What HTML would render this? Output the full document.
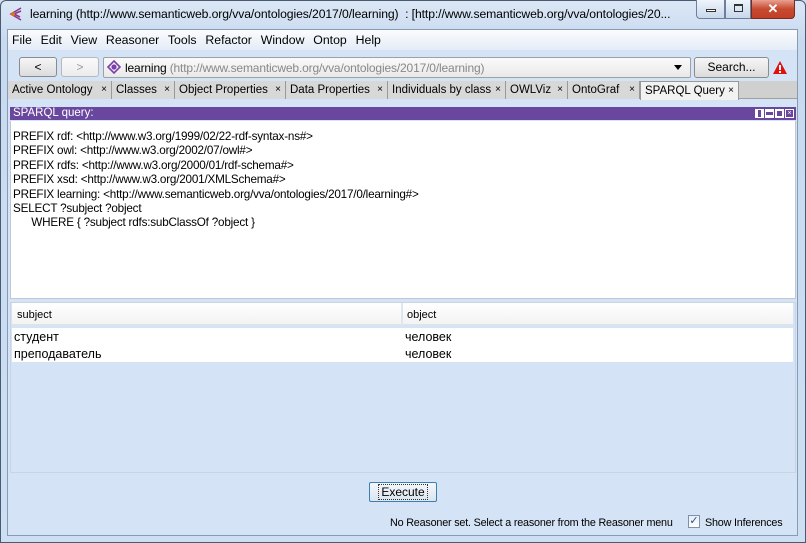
<!DOCTYPE html>
<html><head><meta charset="utf-8"><style>
*{margin:0;padding:0;box-sizing:border-box}
body{width:806px;height:543px;overflow:hidden;background:#cfe0f4;font-family:"Liberation Sans",sans-serif;font-size:12px;color:#000;position:relative}
.a{position:absolute}
.t{white-space:nowrap}
</style></head><body>
<div class="a" style="left:0;top:0;width:806px;height:543px;background:linear-gradient(#dbe7f5,#c8daf0 40px,#cddff3);border:1px solid #4a5a70;border-radius:6px 6px 0 0"></div>
<svg class="a" style="left:8px;top:6px" width="16" height="16"><path d="M13 2 L3 8 L13 14 M6 8 L13 5 M6 8 L12 11" stroke="#8a3a8a" stroke-width="1.6" fill="none"/><circle cx="5" cy="8" r="2" fill="#e07020"/></svg>
<div class="a t" style="left:30px;top:7px;font-size:12.2px;letter-spacing:-0.1px">learning (http://www.semanticweb.org/vva/ontologies/2017/0/learning)&nbsp; : [http://www.semanticweb.org/vva/ontologies/20...</div>
<div class="a" style="left:696px;top:0;width:29px;height:19px;border:1px solid #6d7f99;border-top:none;border-radius:0 0 0 4px;background:linear-gradient(#eef4fb,#c8d8ec)"><div class="a" style="left:9px;top:9px;width:10px;height:3px;border:1px solid #333;background:#fff"></div></div>
<div class="a" style="left:725px;top:0;width:26px;height:19px;border:1px solid #6d7f99;border-top:none;background:linear-gradient(#eef4fb,#c8d8ec)"><div class="a" style="left:8px;top:4px;width:9px;height:8px;border:1px solid #333;border-top-width:2px"></div></div>
<div class="a" style="left:751px;top:0;width:44px;height:19px;border:1px solid #7a2a20;border-top:none;border-radius:0 0 4px 0;background:linear-gradient(#e8a090,#c74a30 50%,#c23e28);color:#fff;font-weight:bold;text-align:center;font-size:13px;line-height:17px">✕</div>
<div class="a" style="left:7px;top:29px;width:791px;height:507px;background:#d4e3f6;border:1px solid #8a9ab0"></div>
<div class="a" style="left:8px;top:30px;width:789px;height:20px;background:linear-gradient(#fbfcfe,#e4ecf7)"></div>
<div class="a t" style="left:12px;top:33px;font-size:12.3px;word-spacing:1px">File&nbsp; Edit&nbsp; View&nbsp; Reasoner&nbsp; Tools&nbsp; Refactor&nbsp; Window&nbsp; Ontop&nbsp; Help</div>
<div class="a" style="left:19px;top:57px;width:38px;height:20px;border:1px solid #8b8b8b;border-radius:3px;background:linear-gradient(#f6f6f6,#dcdcdc);text-align:center;line-height:18px">&lt;</div>
<div class="a" style="left:61px;top:57px;width:38px;height:20px;border:1px solid #b8b8b8;border-radius:3px;background:linear-gradient(#fafafa,#ececec);text-align:center;line-height:18px;color:#999">&gt;</div>
<div class="a" style="left:103px;top:57px;width:588px;height:21px;border:1px solid #a0a0a0;border-radius:2px;background:linear-gradient(#fafafa,#e9e9e9)"></div>
<svg class="a" style="left:107px;top:60px" width="14" height="14"><path d="M7 1 L13 7 L7 13 L1 7Z" fill="none" stroke="#7a3fa8" stroke-width="1.6"/><circle cx="7" cy="7" r="2.6" fill="#7a3fa8"/></svg>
<div class="a t" style="left:125px;top:61px;font-size:12px;letter-spacing:-0.15px">learning <span style="color:#888">(http://www.semanticweb.org/vva/ontologies/2017/0/learning)</span></div>
<div class="a" style="left:674px;top:65px;border-left:4px solid transparent;border-right:4px solid transparent;border-top:5px solid #000"></div>
<div class="a" style="left:694px;top:57px;width:75px;height:21px;border:1px solid #8b8b8b;border-radius:3px;background:linear-gradient(#f6f6f6,#dcdcdc);text-align:center;line-height:19px">Search...</div>
<svg class="a" style="left:772px;top:60px" width="16" height="15"><path d="M8 1 L15 14 L1 14Z" fill="#e01010"/><rect x="7" y="5" width="2" height="5" fill="#fff"/><rect x="7" y="11" width="2" height="2" fill="#fff"/></svg>
<div class="a" style="left:8px;top:81px;width:789px;height:18px;background:#d0d0d0;border-bottom:1px solid #a0a0a0"></div>
<div class="a t" style="left:8px;top:81px;height:18px;display:flex;font-size:11.5px;line-height:18px">
<div style="width:104px;padding-left:4px;border-right:1px solid #999;background:#d8d8d8">Active Ontology<span style="float:right;margin-right:4px;font-size:10px">×</span></div>
<div style="width:63px;padding-left:4px;border-right:1px solid #999;background:#d8d8d8">Classes<span style="float:right;margin-right:4px;font-size:10px">×</span></div>
<div style="width:111px;padding-left:4px;border-right:1px solid #999;background:#d8d8d8">Object Properties<span style="float:right;margin-right:4px;font-size:10px">×</span></div>
<div style="width:102px;padding-left:4px;border-right:1px solid #999;background:#d8d8d8">Data Properties<span style="float:right;margin-right:4px;font-size:10px">×</span></div>
<div style="width:118px;padding-left:4px;border-right:1px solid #999;background:#d8d8d8">Individuals by class<span style="float:right;margin-right:4px;font-size:10px">×</span></div>
<div style="width:62px;padding-left:4px;border-right:1px solid #999;background:#d8d8d8">OWLViz<span style="float:right;margin-right:4px;font-size:10px">×</span></div>
<div style="width:72px;padding-left:4px;border-right:1px solid #999;background:#d8d8d8">OntoGraf<span style="float:right;margin-right:4px;font-size:10px">×</span></div>
<div style="width:99px;padding-left:4px;background:#f2f2f2;border:1px solid #999;border-bottom:none;height:19px">SPARQL Query<span style="float:right;margin-right:4px;font-size:10px">×</span></div>
</div>
<div class="a" style="left:10px;top:107px;width:786px;height:13px;background:#6a479e"></div>
<div class="a t" style="left:13px;top:107px;color:#fff;font-size:11.5px;line-height:13px">SPARQL query:</div>
<div class="a" style="left:755px;top:109px;display:flex;gap:1px"><div style="width:9px;height:9px;border:1px solid #fff;border-left-width:3px;border-right-width:3px"></div><div style="width:9px;height:9px;border:1px solid #fff;border-top-width:3px;border-bottom-width:3px"></div><div style="width:9px;height:9px;border:2px solid #fff"></div><div style="width:9px;height:9px;border:1px solid #fff;color:#fff;font-size:7px;line-height:7px;text-align:center">×</div></div>
<div class="a" style="left:10px;top:121px;width:786px;height:178px;background:#fff;border:1px solid #c0c8d4;border-top:none"></div>
<div class="a t" style="left:13px;top:130px;font-size:11.7px;line-height:14.4px;letter-spacing:-0.2px">PREFIX rdf: &lt;http://www.w3.org/1999/02/22-rdf-syntax-ns#&gt;<br>PREFIX owl: &lt;http://www.w3.org/2002/07/owl#&gt;<br>PREFIX rdfs: &lt;http://www.w3.org/2000/01/rdf-schema#&gt;<br>PREFIX xsd: &lt;http://www.w3.org/2001/XMLSchema#&gt;<br>PREFIX learning: &lt;http://www.semanticweb.org/vva/ontologies/2017/0/learning#&gt;<br>SELECT ?subject ?object<br>&nbsp; &nbsp; &nbsp; WHERE { ?subject rdfs:subClassOf ?object }</div>
<div class="a" style="left:10px;top:302px;width:786px;height:171px;background:#d4e3f6;border:1px solid #c8d4e2"></div>
<div class="a" style="left:12px;top:303px;width:781px;height:23px;background:linear-gradient(#fff,#f3f3f3);border-bottom:2px solid #dde3ea"></div>
<div class="a" style="left:401px;top:303px;width:2px;height:23px;background:#e0e6ee"></div>
<div class="a t" style="left:17px;top:309px;font-size:11px">subject</div>
<div class="a t" style="left:407px;top:309px;font-size:11px">object</div>
<div class="a" style="left:12px;top:328px;width:781px;height:34px;background:#fff"></div>
<div class="a t" style="left:14px;top:329px;font-size:12.5px;line-height:17px">студент<br>преподаватель</div>
<div class="a t" style="left:405px;top:329px;font-size:12.5px;line-height:17px">человек<br>человек</div>
<div class="a" style="left:369px;top:482px;width:68px;height:20px;border:1px solid #3c7fb1;border-radius:2px;background:linear-gradient(#f4f8fc,#dbe4ee);text-align:center;line-height:18px;font-size:12px"><span style="border:1px dotted #333;padding:0 2px">Execute</span></div>
<div class="a t" style="left:390px;top:517px;font-size:10.8px;letter-spacing:-0.2px">No Reasoner set. Select a reasoner from the Reasoner menu</div>
<div class="a" style="left:688px;top:515px;width:12px;height:13px;border:1px solid #8090a8;background:linear-gradient(#e8eef6,#fff);color:#2a4a9a;font-size:11px;line-height:11px;text-align:center">✓</div>
<div class="a t" style="left:705px;top:517px;font-size:10.8px;letter-spacing:-0.2px">Show Inferences</div>
</body></html>
